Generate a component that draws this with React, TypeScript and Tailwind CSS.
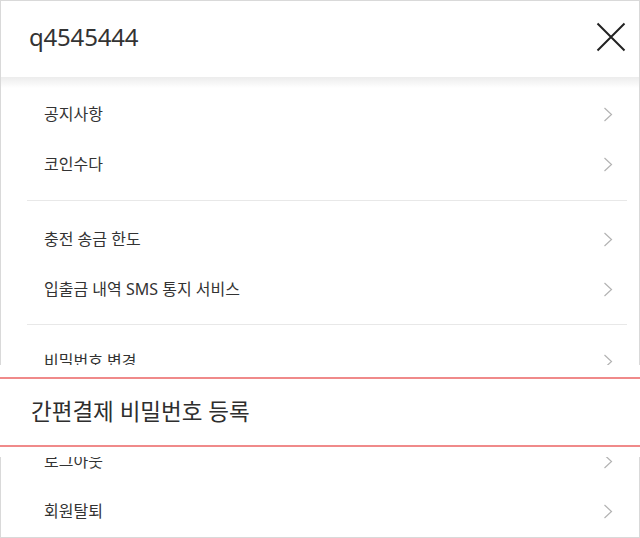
import React from "react";

const font = {
  fontFamily: '"Noto Sans", "Noto Sans CJK KR", sans-serif',
};

const groups: string[][] = [
  ["공지사항", "코인수다"],
  ["충전 송금 한도", "입출금 내역 SMS 통지 서비스"],
  ["비밀번호 변경", "간편결제 비밀번호 등록", "로그아웃", "회원탈퇴"],
];

const groupPad = ["pt-[12px] pb-[11px]", "pt-[13px] pb-[10px]", "pt-[11px] pb-[10px]"];

// the row that sits under the enlarged callout
const highlighted = "간편결제 비밀번호 등록";

const Chevron = () => (
  <svg width="10" height="15" viewBox="0 0 10 15" fill="none">
    <path d="M1.5 1 L8.5 7.5 L1.5 14" stroke="#b3b3b3" strokeWidth="1.2" />
  </svg>
);

const MenuRow = ({ label }: { label: string }) => (
  <div className="flex items-center justify-between h-[50px] pl-[17px] pr-[14px]">
    <span className={`text-[16px] text-[#333] ${label === highlighted ? "invisible" : ""}`}>{label}</span>
    <Chevron />
  </div>
);

const App = () => {
  return (
    <div className="relative w-[640px] h-[538px] bg-white overflow-hidden" style={font}>
      <div className="w-full h-full border border-[#d9d9d9] overflow-hidden">
        <header className="relative z-10 flex items-center justify-between h-[76px] pl-[28px] pr-[13px] pb-[5px] bg-white">
          <span className="text-[24px] text-[#333] tracking-[-0.2px]">q4545444</span>
          <button className="w-[30px] h-[30px] flex items-center justify-center">
            <svg width="30" height="30" viewBox="0 0 30 30" fill="none">
              <path d="M1.5 1.5 L28.5 28.5 M28.5 1.5 L1.5 28.5" stroke="#222" strokeWidth="2" />
            </svg>
          </button>
          <div className="absolute left-0 right-0 top-full h-[11px] bg-gradient-to-b from-[#ececec] to-white/0" />
        </header>

        <div className="ml-[26px] mr-[12px]">
          {groups.map((items, gi) => (
            <div
              key={gi}
              className={`${groupPad[gi]} ${gi < groups.length - 1 ? "border-b border-[#e8e8e8]" : ""}`}
            >
              {items.map((label) => (
                <MenuRow key={label} label={label} />
              ))}
            </div>
          ))}
        </div>
      </div>

      <div className="absolute left-0 right-0 top-[365px] h-[92px] bg-white">
        <div className="mt-[12px] h-[2px] bg-[#f08a8a]" />
        <div className="flex items-center h-[66px] pl-[31px]">
          <span className="text-[22.5px] text-[#2e2e2e]">간편결제 비밀번호 등록</span>
        </div>
        <div className="h-[2px] bg-[#f08a8a]" />
      </div>
    </div>
  );
};

export default App;
